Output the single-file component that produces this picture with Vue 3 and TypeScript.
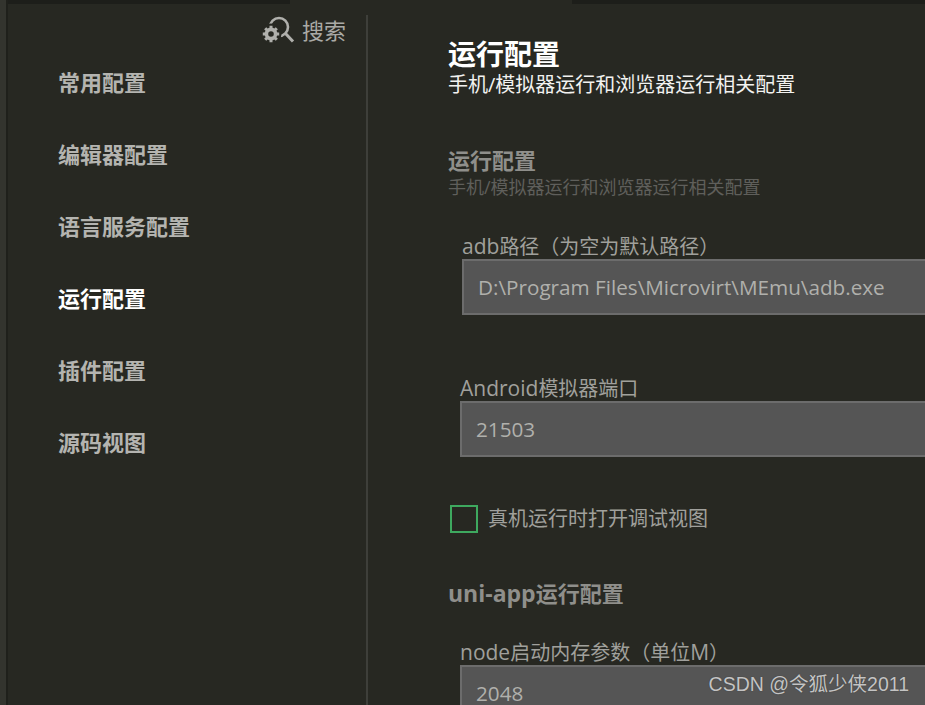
<script setup lang="ts">
const navItems = [
  { label: '常用配置', active: false },
  { label: '编辑器配置', active: false },
  { label: '语言服务配置', active: false },
  { label: '运行配置', active: true },
  { label: '插件配置', active: false },
  { label: '源码视图', active: false }
]
</script>

<template>
  <div class="window">
    <div class="edge"></div>
    <div class="tabstrip left"></div>
    <div class="tabstrip right"></div>
    <aside class="sidebar">
      <div class="search">
        <svg class="search-icon" width="32" height="28" viewBox="0 0 32 28" fill="none">
          <circle cx="16" cy="11" r="9" stroke="#b0b0ac" stroke-width="2.6" />
          <path d="M22.5 17.5 L30 25.5" stroke="#b0b0ac" stroke-width="3" />
          <circle cx="8" cy="18" r="10.5" fill="#272822" />
          <circle cx="8" cy="18" r="4.6" stroke="#b0b0ac" stroke-width="3.6" />
          <path d="M8 9.8v3.4M8 22.8v3.4M-.2 18h3.4M12.8 18h3.4M2.2 12.2l2.4 2.4M11.4 21.4l2.4 2.4M2.2 23.8l2.4-2.4M11.4 14.6l2.4-2.4" stroke="#b0b0ac" stroke-width="3" />
        </svg>
        <span>搜索</span>
      </div>
      <nav class="nav">
        <div
          v-for="item in navItems"
          :key="item.label"
          class="nav-item"
          :class="{ active: item.active }"
        >{{ item.label }}</div>
      </nav>
    </aside>
    <main class="content">
      <h1>运行配置</h1>
      <p class="lead">手机/模拟器运行和浏览器运行相关配置</p>

      <h2>运行配置</h2>
      <p class="sub">手机/模拟器运行和浏览器运行相关配置</p>

      <div class="field first">
        <label><span class="latin">adb</span>路径（为空为默认路径）</label>
        <div class="input">D:\Program Files\Microvirt\MEmu\adb.exe</div>
      </div>

      <div class="field second">
        <label><span class="latin">Android</span>模拟器端口</label>
        <div class="input">21503</div>
      </div>

      <div class="check">
        <span class="box"></span>
        <span>真机运行时打开调试视图</span>
      </div>

      <h2 class="section"><span class="latin">uni-app</span>运行配置</h2>

      <div class="field third">
        <label><span class="latin">node</span>启动内存参数（单位<span class="latin">M</span>）</label>
        <div class="input">2048</div>
      </div>
    </main>
    <div class="watermark">CSDN @令狐少侠2011</div>
  </div>
</template>

<style>
html,
body {
  margin: 0;
  overflow: hidden;
  background: #272822;
}
</style>

<style scoped>
.window {
  position: relative;
  display: flex;
  width: 925px;
  height: 705px;
  overflow: hidden;
  background: #272822;
  color: #a8a8a4;
  font-family: "Open Sans", "Noto Sans CJK SC", sans-serif;
}

.edge {
  flex: none;
  width: 6px;
  background: #33342e;
  border-right: 2px solid #1f201b;
}

.tabstrip {
  position: absolute;
  top: 0;
  height: 4px;
  background: #1d1e1a;
}

.tabstrip.left {
  left: 8px;
  width: 282px;
}

.tabstrip.right {
  left: 572px;
  right: 0;
}

.sidebar {
  flex: none;
  width: 358px;
  height: 690px;
  margin-top: 15px;
  border-right: 2px solid #3e3f3a;
}

.search {
  display: flex;
  align-items: center;
  justify-content: flex-end;
  gap: 7px;
  height: 28px;
  margin-bottom: 6px;
  padding-right: 20px;
  font-size: 22px;
  color: #aaaaa6;
}

.search-icon {
  margin-top: 2px;
  overflow: visible;
}

.nav {
  display: flex;
  flex-direction: column;
  padding-left: 50px;
}

.nav-item {
  height: 72px;
  line-height: 66px;
  font-size: 22px;
  font-weight: 700;
  color: #b4b4b0;
}

.nav-item.active {
  color: #ffffff;
}

.content {
  flex: 1;
  min-width: 0;
  padding: 39px 0 0 80px;
}

h1 {
  margin: 0;
  font-size: 28px;
  line-height: 30px;
  font-weight: 700;
  color: #ffffff;
}

.lead {
  margin: 3px 0 0;
  font-size: 20px;
  line-height: 26px;
  color: #f2f2f0;
}

h2 {
  height: 28px;
  margin: 0;
  font-size: 22px;
  line-height: 28px;
  font-weight: 700;
  color: #8f8f8b;
}

.lead + h2 {
  margin-top: 48px;
}

h2 .latin {
  font-size: 23px;
}

.sub {
  margin: 1px 0 0;
  font-size: 18px;
  line-height: 24px;
  color: #5f5f5b;
}

.field label {
  display: block;
  height: 26px;
  font-size: 20px;
  line-height: 26px;
  color: #a0a09c;
}

.field label .latin {
  font-size: 21px;
}

.input {
  box-sizing: border-box;
  height: 56px;
  padding-left: 14px;
  line-height: 52px;
  font-size: 20.7px;
  color: #b0b0ac;
  background: #555555;
  border: 2px solid #6c6c6c;
  border-right: 0;
}

.field.first {
  margin: 34px 0 0 14px;
}

.field.second {
  margin: 60px 0 0 12px;
}

.check {
  display: flex;
  align-items: center;
  gap: 10px;
  margin: 48px 0 0 2px;
  font-size: 20px;
  line-height: 28px;
  color: #a0a09c;
}

.box {
  box-sizing: border-box;
  width: 28px;
  height: 28px;
  border: 2px solid #3ea95f;
}

h2.section {
  margin-top: 46px;
}

.field.third {
  margin: 32px 0 0 12px;
}

.watermark {
  position: absolute;
  right: 16px;
  bottom: 9px;
  font-family: "Liberation Sans", "Noto Sans CJK SC", sans-serif;
  font-size: 19.5px;
  line-height: 24px;
  color: #c4c4c4;
  text-shadow: 0 0 1px #333;
}
</style>
